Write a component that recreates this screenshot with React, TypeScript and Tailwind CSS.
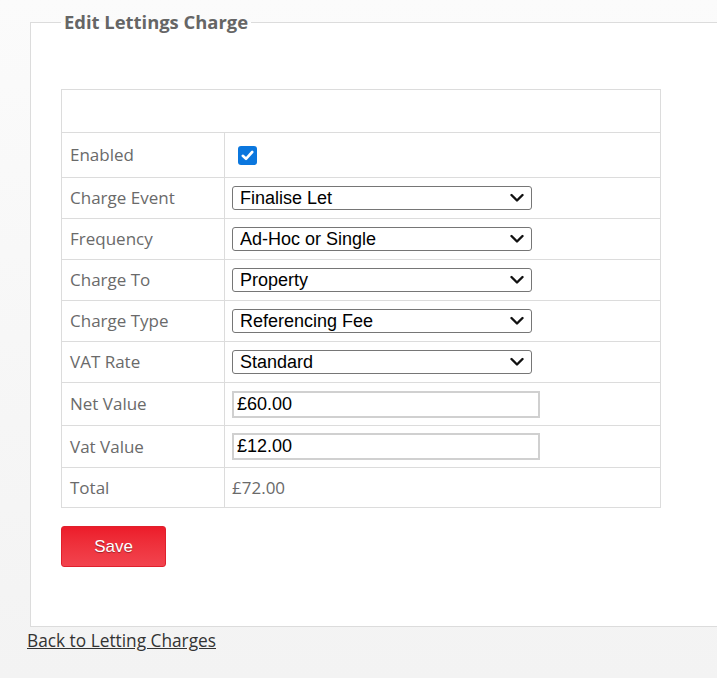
import React from 'react';

const segoe = { fontFamily: '"Open Sans", "Noto Sans", sans-serif' };

const Chevron = () => (
  <svg width="14" height="9" viewBox="0 0 14 9" className="pointer-events-none absolute right-[8px] top-1/2 -translate-y-1/2">
    <path d="M1.5 1.5 L7 7 L12.5 1.5" fill="none" stroke="#111" strokeWidth="2.4" strokeLinecap="round" strokeLinejoin="round" />
  </svg>
);

const Select = ({ value }: { value: string }) => (
  <div className="relative w-[300px]">
    <select
      defaultValue={value}
      className="block h-[24px] w-full appearance-none rounded-[3px] border border-[#767676] bg-white pl-[7px] text-[18px] leading-[22px] text-black font-['Liberation_Sans',Arial,sans-serif]"
    >
      <option>{value}</option>
    </select>
    <Chevron />
  </div>
);

const TextInput = ({ value }: { value: string }) => (
  <input
    defaultValue={value}
    className="block h-[27px] w-[308px] border-2 border-[#d0d0d0] bg-white px-[3px] text-[18px] text-black font-['Liberation_Sans',Arial,sans-serif] outline-none"
  />
);

const rows: { label: string; h: string; cell: React.ReactNode }[] = [
  {
    label: 'Enabled',
    h: 'h-[45px]',
    cell: (
      <span className="ml-[6px] mt-[1px] flex h-[19px] w-[19px] items-center justify-center rounded-[3px] bg-[#0b77de]">
        <svg width="13" height="11" viewBox="0 0 13 11">
          <path d="M1.8 5.8 L5 8.8 L11.2 2" fill="none" stroke="#fff" strokeWidth="2.6" strokeLinecap="round" strokeLinejoin="round" />
        </svg>
      </span>
    ),
  },
  { label: 'Charge Event', h: 'h-[41px]', cell: <Select value="Finalise Let" /> },
  { label: 'Frequency', h: 'h-[41px]', cell: <Select value="Ad-Hoc or Single" /> },
  { label: 'Charge To', h: 'h-[41px]', cell: <Select value="Property" /> },
  { label: 'Charge Type', h: 'h-[41px]', cell: <Select value="Referencing Fee" /> },
  { label: 'VAT Rate', h: 'h-[41px]', cell: <Select value="Standard" /> },
  { label: 'Net Value', h: 'h-[43px]', cell: <TextInput value="£60.00" /> },
  { label: 'Vat Value', h: 'h-[42px]', cell: <TextInput value="£12.00" /> },
  { label: 'Total', h: 'h-[39px]', cell: <span className="text-[17px] text-[#6a6a6a]">£72.00</span> },
];

export default function App() {
  return (
    <div className="min-h-[678px] w-[717px] overflow-hidden bg-gradient-to-b from-[#fbfbfb] to-[#f3f3f3] pt-[9px]" style={segoe}>
      <fieldset className="ml-[30px] mr-[-40px] border border-[#dcdcdc] bg-white pb-[59px] pl-[30px]">
        <legend className="px-[3px] text-[18.4px] font-bold leading-[26px] text-[#666]">Edit Lettings Charge</legend>

        <div className="mt-[54px] w-[600px] border border-[#dcdcdc]">
          <div className="h-[43px] border-b border-[#dcdcdc]" />
          {rows.map((r, i) => (
            <div
              key={r.label}
              className={`grid grid-cols-[163px_1fr] ${r.h} ${i < rows.length - 1 ? 'border-b border-[#dcdcdc]' : ''}`}
            >
              <div className="flex items-center border-r border-[#dcdcdc] pl-[8px] text-[17px] text-[#6a6a6a]">{r.label}</div>
              <div className="flex items-center pl-[7px]">{r.cell}</div>
            </div>
          ))}
        </div>

        <button className="mt-[18px] h-[41px] w-[105px] rounded-[3px] border border-[#e0202c] bg-gradient-to-b from-[#ec1b2a] to-[#f2434e] text-[17px] text-white [text-shadow:0_1px_1px_rgba(0,0,0,0.35)] font-['Liberation_Sans',Arial,sans-serif]">
          Save
        </button>
      </fieldset>

      <a href="#" className="ml-[27px] mt-[1px] inline-block text-[17.3px] leading-[26px] text-[#333] underline">
        Back to Letting Charges
      </a>
    </div>
  );
}
